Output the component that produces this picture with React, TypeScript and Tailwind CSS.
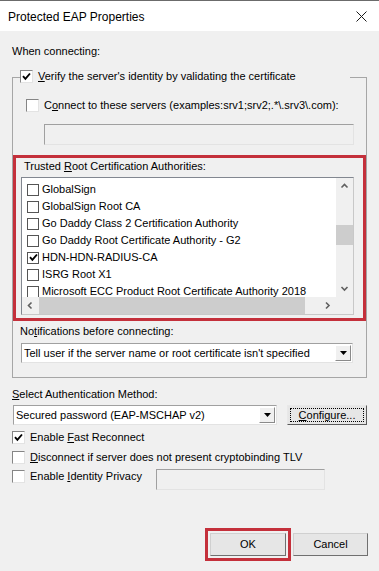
import React from "react";

const FONT = { fontFamily: '"Liberation Sans", Arial, sans-serif' };

function Box({ checked, flat }: { checked?: boolean; flat?: boolean }) {
  const cls = flat
    ? "w-[12px] h-[12px] border border-[#555555] bg-white flex items-center justify-center shrink-0"
    : "w-[13px] h-[13px] border border-t-[#858585] border-l-[#858585] border-r-[#e3e3e3] border-b-[#e3e3e3] bg-white flex items-center justify-center shrink-0";
  return (
    <div className={cls}>
      {checked && (
        <svg width="9" height="9" viewBox="0 0 9 9">
          <path d="M1 4.2 L3.4 6.8 L8 1.5" fill="none" stroke="#000" strokeWidth="1.9" />
        </svg>
      )}
    </div>
  );
}

function Chevron({ dir }: { dir: "up" | "down" | "left" | "right" }) {
  const d =
    dir === "up"
      ? "M1.5 5.5 L4.5 2.5 L7.5 5.5"
      : dir === "down"
      ? "M1.5 3 L4.5 6 L7.5 3"
      : dir === "left"
      ? "M5.5 1.5 L2.5 4.5 L5.5 7.5"
      : "M3 1.5 L6 4.5 L3 7.5";
  return (
    <svg width="9" height="9" viewBox="0 0 9 9">
      <path d={d} fill="none" stroke="#606060" strokeWidth="1.6" />
    </svg>
  );
}

function DropArrow() {
  return (
    <div className="w-[16px] self-stretch my-[1px] mr-[1px] bg-[#f0f0f0] border border-t-[#ffffff] border-l-[#ffffff] border-r-[#8a8a8a] border-b-[#8a8a8a] flex items-center justify-center">
      <svg width="7" height="4" viewBox="0 0 7 4">
        <polygon points="0,0 7,0 3.5,4" fill="#000" />
      </svg>
    </div>
  );
}

const items: { name: string; checked?: boolean }[] = [
  { name: "GlobalSign" },
  { name: "GlobalSign Root CA" },
  { name: "Go Daddy Class 2 Certification Authority" },
  { name: "Go Daddy Root Certificate Authority - G2" },
  { name: "HDN-HDN-RADIUS-CA", checked: true },
  { name: "ISRG Root X1" },
  { name: "Microsoft ECC Product Root Certificate Authority 2018" },
];

export default function App() {
  return (
    <div
      className="w-[379px] h-[571px] bg-[#f0f0f0] flex flex-col overflow-hidden text-[11px] leading-[13px] text-black"
      style={FONT}
    >
      {/* Title bar */}
      <div className="h-[31px] shrink-0 bg-white border-t border-[#6b6b6b] flex items-center justify-between pl-[8px] pr-[12px] pt-[1px]">
        <span className="text-[12px] leading-[16px]">Protected EAP Properties</span>
        <svg width="11" height="11" viewBox="0 0 11 11">
          <path d="M0.5 0.5 L10.5 10.5 M10.5 0.5 L0.5 10.5" stroke="#1a1a1a" strokeWidth="1" />
        </svg>
      </div>

      {/* When connecting */}
      <div className="mt-[14px] pl-[12px] h-[13px]">When connecting:</div>

      {/* Group box */}
      <div className="mt-[12px] ml-[12px] w-[355px] flex flex-col">
        <div className="flex h-[13px]">
          <div className="w-[8px] mt-[7px] border-t border-l border-[#a6a6a6]" />
          <div className="w-[330px] flex items-center gap-[5px]">
            <Box checked />
            <span>
              <span className="underline">V</span>erify the server's identity by validating the certificate
            </span>
          </div>
          <div className="flex-1 mt-[7px] border-t border-r border-[#a6a6a6]" />
        </div>
        <div className="border-l border-r border-b border-[#a6a6a6] flex flex-col pb-[14px]">
          <div className="mt-[16px] ml-[13px] flex items-center gap-[5px] h-[13px]">
            <Box />
            <span>
              C<span className="underline">o</span>nnect to these servers (examples:srv1;srv2;.*\.srv3\.com):
            </span>
          </div>
          <div className="mt-[12px] ml-[31px] w-[310px] h-[21px] bg-[#f0f0f0] border border-t-[#a0a0a0] border-l-[#a0a0a0] border-r-[#e3e3e3] border-b-[#e3e3e3]" />

          {/* Red highlighted area */}
          <div className="mt-[10px] h-[166px] border-[3px] border-[#c4303b] flex flex-col">
            <div className="mt-[2px] pl-[8px] h-[13px]">
              Trusted <span className="underline">R</span>oot Certification Authorities:
            </div>
            <div className="mt-[4px] ml-[5px] w-[333px] h-[138px] border border-t-[#828790] border-l-[#828790] border-r-[#c8c8c8] border-b-[#c8c8c8] bg-white grid grid-cols-[1fr_17px] grid-rows-[1fr_17px]">
              <div className="overflow-hidden pt-[3px] pl-[5px]">
                {items.map((it) => (
                  <div key={it.name} className="h-[17px] flex items-center gap-[3px] whitespace-nowrap">
                    <Box flat checked={it.checked} />
                    <span className="leading-[17px]">{it.name}</span>
                  </div>
                ))}
              </div>
              <div className="bg-[#f0f0f0] flex flex-col">
                <div className="h-[17px] flex items-center justify-center">
                  <Chevron dir="up" />
                </div>
                <div className="h-[30px]" />
                <div className="h-[20px] bg-[#cdcdcd]" />
                <div className="flex-1" />
                <div className="h-[17px] flex items-center justify-center">
                  <Chevron dir="down" />
                </div>
              </div>
              <div className="bg-[#f0f0f0] flex">
                <div className="w-[17px] flex items-center justify-center">
                  <Chevron dir="left" />
                </div>
                <div className="w-[266px] bg-[#cdcdcd]" />
                <div className="flex-1" />
                <div className="w-[17px] flex items-center justify-center">
                  <Chevron dir="right" />
                </div>
              </div>
              <div className="bg-[#f0f0f0]" />
            </div>
          </div>

          <div className="mt-[4px] pl-[7px] h-[13px]">
            No<span className="underline">t</span>ifications before connecting:
          </div>
          <div className="mt-[5px] ml-[8px] w-[332px] h-[20px] bg-white border border-t-[#a0a0a0] border-l-[#a0a0a0] border-r-[#e3e3e3] border-b-[#e3e3e3] flex items-center">
            <span className="flex-1 pl-[2px] whitespace-nowrap">
              Tell user if the server name or root certificate isn't specified
            </span>
            <DropArrow />
          </div>
        </div>
      </div>

      {/* Authentication method */}
      <div className="mt-[10px] pl-[12px] h-[13px]">
        <span className="underline">S</span>elect Authentication Method:
      </div>
      <div className="mt-[4px] ml-[13px] flex items-center gap-[10px]">
        <div className="w-[264px] h-[20px] bg-white border border-t-[#a0a0a0] border-l-[#a0a0a0] border-r-[#e3e3e3] border-b-[#e3e3e3] flex items-center">
          <span className="flex-1 pl-[2px] whitespace-nowrap">Secured password (EAP-MSCHAP v2)</span>
          <DropArrow />
        </div>
        <div className="w-[80px] h-[20px] bg-[#e6e6e6] border border-t-[#e8e8e8] border-l-[#e8e8e8] border-r-[#5a5a5a] border-b-[#5a5a5a] flex p-[2px]">
          <div className="flex-1 border border-dotted border-[#000] flex items-center justify-center">
            <span>
              <span className="underline">C</span>onfigure...
            </span>
          </div>
        </div>
      </div>

      <div className="mt-[6px] ml-[12px] flex items-center gap-[5px] h-[13px]">
        <Box checked />
        <span>
          Enable <span className="underline">F</span>ast Reconnect
        </span>
      </div>
      <div className="mt-[7px] ml-[12px] flex items-center gap-[5px] h-[13px]">
        <Box />
        <span>
          <span className="underline">D</span>isconnect if server does not present cryptobinding TLV
        </span>
      </div>
      <div className="mt-[5px] ml-[12px] flex items-start">
        <div className="w-[144px] mt-[1px] flex items-center gap-[5px] h-[13px]">
          <Box />
          <span>
            Enable <span className="underline">I</span>dentity Privacy
          </span>
        </div>
        <div className="w-[169px] h-[21px] bg-[#f0f0f0] border border-t-[#a0a0a0] border-l-[#a0a0a0] border-r-[#e3e3e3] border-b-[#e3e3e3]" />
      </div>

      {/* Buttons */}
      <div className="mt-[38px] flex justify-end items-center pr-[11px] gap-[2px]">
        <div className="border-[3px] border-[#c4303b] p-[2px]">
          <div className="w-[76px] h-[23px] bg-[#e6e6e6] border border-t-[#d0d0d0] border-l-[#d0d0d0] border-r-[#707070] border-b-[#707070] flex items-center justify-center">
            OK
          </div>
        </div>
        <div className="w-[75px] h-[23px] bg-[#e6e6e6] border border-t-[#d0d0d0] border-l-[#d0d0d0] border-r-[#707070] border-b-[#707070] flex items-center justify-center">
          Cancel
        </div>
      </div>
    </div>
  );
}
